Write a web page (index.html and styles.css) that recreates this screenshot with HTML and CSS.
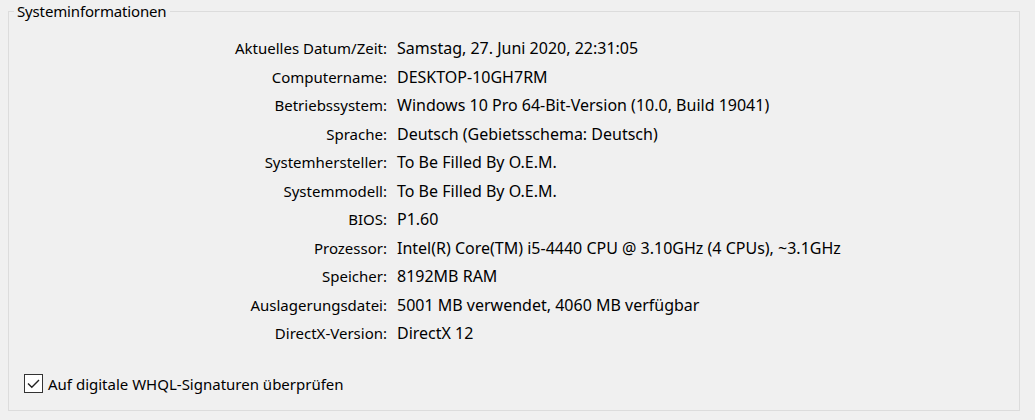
FILE: index.html
```html
<!DOCTYPE html>
<html lang="de">
<head>
<meta charset="utf-8">
<link rel="stylesheet" href="styles.css">
</head>
<body>
<fieldset class="group">
  <legend class="group-title">Systeminformationen</legend>
  <div class="info">
    <div class="label">Aktuelles Datum/Zeit:</div><div class="value">Samstag, 27. Juni 2020, 22:31:05</div>
    <div class="label">Computername:</div><div class="value">DESKTOP-10GH7RM</div>
    <div class="label">Betriebssystem:</div><div class="value">Windows 10 Pro 64-Bit-Version (10.0, Build 19041)</div>
    <div class="label">Sprache:</div><div class="value">Deutsch (Gebietsschema: Deutsch)</div>
    <div class="label">Systemhersteller:</div><div class="value">To Be Filled By O.E.M.</div>
    <div class="label">Systemmodell:</div><div class="value">To Be Filled By O.E.M.</div>
    <div class="label">BIOS:</div><div class="value">P1.60</div>
    <div class="label">Prozessor:</div><div class="value">Intel(R) Core(TM) i5-4440 CPU @ 3.10GHz (4 CPUs), ~3.1GHz</div>
    <div class="label">Speicher:</div><div class="value">8192MB RAM</div>
    <div class="label">Auslagerungsdatei:</div><div class="value">5001 MB verwendet, 4060 MB verfügbar</div>
    <div class="label">DirectX-Version:</div><div class="value">DirectX 12</div>
  </div>
  <label class="check">
    <span class="box"><svg width="17" height="17" viewBox="0 0 17 17"><path d="M3 8.5 L6.8 12.3 L14 5" fill="none" stroke="#222" stroke-width="1.4"/></svg></span>
    <span class="check-text">Auf digitale WHQL-Signaturen überprüfen</span>
  </label>
</fieldset>
</body>
</html>
```

FILE: styles.css
```css
html, body {
  margin: 0;
  padding: 0;
  background: #f0f0f0;
}
body {
  font-family: "Noto Sans", "DejaVu Sans", sans-serif;
  font-size: 16px;
  color: #000;
  width: 1035px;
  height: 420px;
  overflow: hidden;
}
.group {
  margin: 2px 0 0 8px;
  width: 1012px;
  height: 409px;
  box-sizing: border-box;
  border: 1px solid #dcdcdc;
  padding: 0;
  display: flex;
  flex-direction: column;
}
.group-title {
  margin-left: 5px;
  padding: 0 3px;
  font-size: 15px;
  line-height: 18px;
  letter-spacing: -0.15px;
}
.info {
  display: grid;
  grid-template-columns: 378px auto;
  column-gap: 10px;
  grid-auto-rows: 28.5px;
  align-items: baseline;
  margin-top: 14px;
  line-height: 28.5px;
}
.label {
  text-align: right;
  white-space: nowrap;
  font-size: 15px;
}
.value {
  white-space: nowrap;
}
.check {
  display: flex;
  align-items: center;
  gap: 5px;
  margin: 26px 0 0 15px;
  font-size: 15px;
}
.box {
  width: 19px;
  height: 19px;
  box-sizing: border-box;
  border: 1px solid #333;
  background: #fff;
  display: flex;
  align-items: center;
  justify-content: center;
}
.box svg {
  display: block;
}
```
